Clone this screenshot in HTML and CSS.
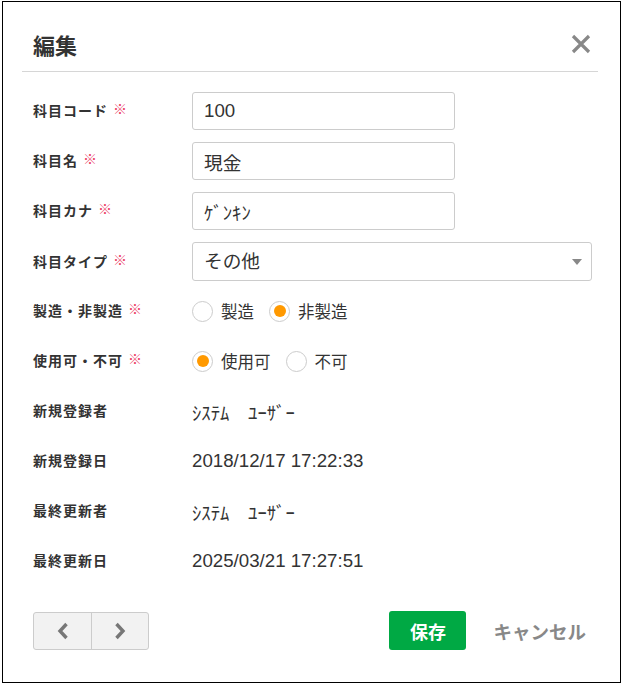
FILE: index.html
```html
<!DOCTYPE html>
<html lang="ja">
<head>
    <meta charset="UTF-8">
    <meta name="viewport" content="width=device-width, initial-scale=1.0">
    <title>編集</title>
    <link rel="stylesheet" href="styles.css">
</head>
<body>

<div class="dialog">
    <div class="dialog-header">
        <h2>編集</h2>
        <button class="close" aria-label="閉じる">
            <svg width="20" height="20" viewBox="0 0 20 20"><path d="M2 2 L18 18 M18 2 L2 18" stroke="#888" stroke-width="3.2" fill="none"/></svg>
        </button>
    </div>

    <div class="dialog-body">
        <div class="row">
            <label for="code">科目コード <span class="req">※</span></label>
            <input type="text" id="code" class="field" value="100">
        </div>
        <div class="row">
            <label for="name">科目名 <span class="req">※</span></label>
            <input type="text" id="name" class="field" value="現金">
        </div>
        <div class="row">
            <label for="kana">科目カナ <span class="req">※</span></label>
            <input type="text" id="kana" class="field" value="ｹﾞﾝｷﾝ">
        </div>
        <div class="row">
            <label for="type">科目タイプ <span class="req">※</span></label>
            <div class="select-wrap">
                <select id="type" class="field wide">
                    <option>その他</option>
                </select>
            </div>
        </div>
        <div class="row">
            <label>製造・非製造 <span class="req">※</span></label>
            <div class="radios">
                <label class="radio"><input type="radio" name="mfg"> 製造</label>
                <label class="radio"><input type="radio" name="mfg" checked> 非製造</label>
            </div>
        </div>
        <div class="row">
            <label>使用可・不可 <span class="req">※</span></label>
            <div class="radios">
                <label class="radio"><input type="radio" name="use" checked> 使用可</label>
                <label class="radio"><input type="radio" name="use"> 不可</label>
            </div>
        </div>
        <div class="row">
            <label>新規登録者</label>
            <span class="value">ｼｽﾃﾑ　ﾕｰｻﾞｰ</span>
        </div>
        <div class="row">
            <label>新規登録日</label>
            <span class="value">2018/12/17 17:22:33</span>
        </div>
        <div class="row">
            <label>最終更新者</label>
            <span class="value">ｼｽﾃﾑ　ﾕｰｻﾞｰ</span>
        </div>
        <div class="row">
            <label>最終更新日</label>
            <span class="value">2025/03/21 17:27:51</span>
        </div>
    </div>

    <div class="dialog-footer">
        <div class="pager">
            <button aria-label="前へ">
                <svg width="12" height="18" viewBox="0 0 12 18"><path d="M9.5 2 L3 9 L9.5 16" stroke="#777" stroke-width="3.4" fill="none"/></svg>
            </button>
            <button aria-label="次へ">
                <svg width="12" height="18" viewBox="0 0 12 18"><path d="M2.5 2 L9 9 L2.5 16" stroke="#777" stroke-width="3.4" fill="none"/></svg>
            </button>
        </div>
        <div class="actions">
            <button class="btn-save">保存</button>
            <button class="btn-cancel">キャンセル</button>
        </div>
    </div>
</div>

</body>
</html>
```

FILE: styles.css
```css
body {
    margin: 0;
    font-family: "Liberation Sans", "Noto Sans CJK JP", sans-serif;
    color: #333;
    background: #fff;
}
.dialog {
    box-sizing: border-box;
    width: 619px;
    height: 682px;
    margin: 1px 0 0 2px;
    border: 1px solid #000;
    background: #fff;
    display: flex;
    flex-direction: column;
}
.dialog-header {
    box-sizing: border-box;
    height: 70px;
    margin: 0 22px 0 19px;
    padding: 14px 7px 0 11px;
    border-bottom: 1px solid #d6d6d6;
    display: flex;
    align-items: center;
    justify-content: space-between;
}
.dialog-header h2 {
    margin: 0;
    font-size: 22px;
    font-weight: bold;
    color: #333;
}
.close {
    border: none;
    background: none;
    padding: 0;
    width: 20px;
    height: 20px;
    cursor: pointer;
}
.close svg {
    display: block;
}
.dialog-body {
    padding: 20px 28px 0 30px;
    display: flex;
    flex-direction: column;
    gap: 12px;
}
.row {
    display: grid;
    grid-template-columns: 159px 400px;
    align-items: center;
    height: 38px;
}
.row > label {
    font-size: 14px;
    font-weight: bold;
    letter-spacing: 1px;
    color: #333;
    margin-top: -2px;
}
.req {
    color: #ec3d65;
    font-weight: bold;
    font-size: 14px;
    letter-spacing: 0;
    position: relative;
    top: -2px;
}
.field {
    box-sizing: border-box;
    width: 263px;
    height: 38px;
    padding: 0 11px;
    border: 1px solid #ccc;
    border-radius: 3px;
    font-family: "Liberation Sans", "Noto Sans CJK JP", sans-serif;
    font-size: 18.7px;
    color: #333;
    background: #fff;
}
.field.wide {
    width: 400px;
    height: 39px;
    appearance: none;
    -webkit-appearance: none;
    padding-left: 11px;
}
.select-wrap {
    position: relative;
    width: 400px;
}
.select-wrap::after {
    content: "";
    position: absolute;
    right: 10px;
    top: 17px;
    border-left: 5px solid transparent;
    border-right: 5px solid transparent;
    border-top: 6px solid #888;
    pointer-events: none;
}
.radios {
    display: flex;
    gap: 15px;
}
.radio {
    display: flex;
    align-items: center;
    gap: 8px;
    font-size: 16.5px;
    color: #333;
    cursor: pointer;
}
.radio input {
    appearance: none;
    -webkit-appearance: none;
    box-sizing: border-box;
    width: 21px;
    height: 21px;
    margin: 0;
    border: 1px solid #ccc;
    border-radius: 50%;
    background: #fff;
    display: flex;
    align-items: center;
    justify-content: center;
}
.radio input:checked::before {
    content: "";
    width: 12px;
    height: 12px;
    border-radius: 50%;
    background: #f90;
}
.value {
    font-size: 18.7px;
    color: #333;
}
.dialog-footer {
    padding: 31px 26px 0 30px;
    display: flex;
    justify-content: space-between;
    align-items: center;
}
.pager {
    display: flex;
    border: 1px solid #ccc;
    border-radius: 3px;
    background: #f2f2f2;
    height: 38px;
    box-sizing: border-box;
}
.pager button {
    width: 57px;
    border: none;
    background: none;
    padding: 0;
    display: flex;
    align-items: center;
    justify-content: center;
    cursor: pointer;
}
.pager button + button {
    border-left: 1px solid #ccc;
}
.actions {
    display: flex;
    align-items: center;
    gap: 19px;
}
.btn-save {
    width: 77px;
    height: 39px;
    border: none;
    border-radius: 3px;
    background: #00a944;
    color: #fff;
    font-family: "Liberation Sans", "Noto Sans CJK JP", sans-serif;
    font-size: 18px;
    font-weight: bold;
    cursor: pointer;
}
.btn-cancel {
    border: none;
    background: none;
    padding: 0 8px;
    color: #888;
    font-family: "Liberation Sans", "Noto Sans CJK JP", sans-serif;
    font-size: 18.5px;
    font-weight: bold;
    cursor: pointer;
}
```
